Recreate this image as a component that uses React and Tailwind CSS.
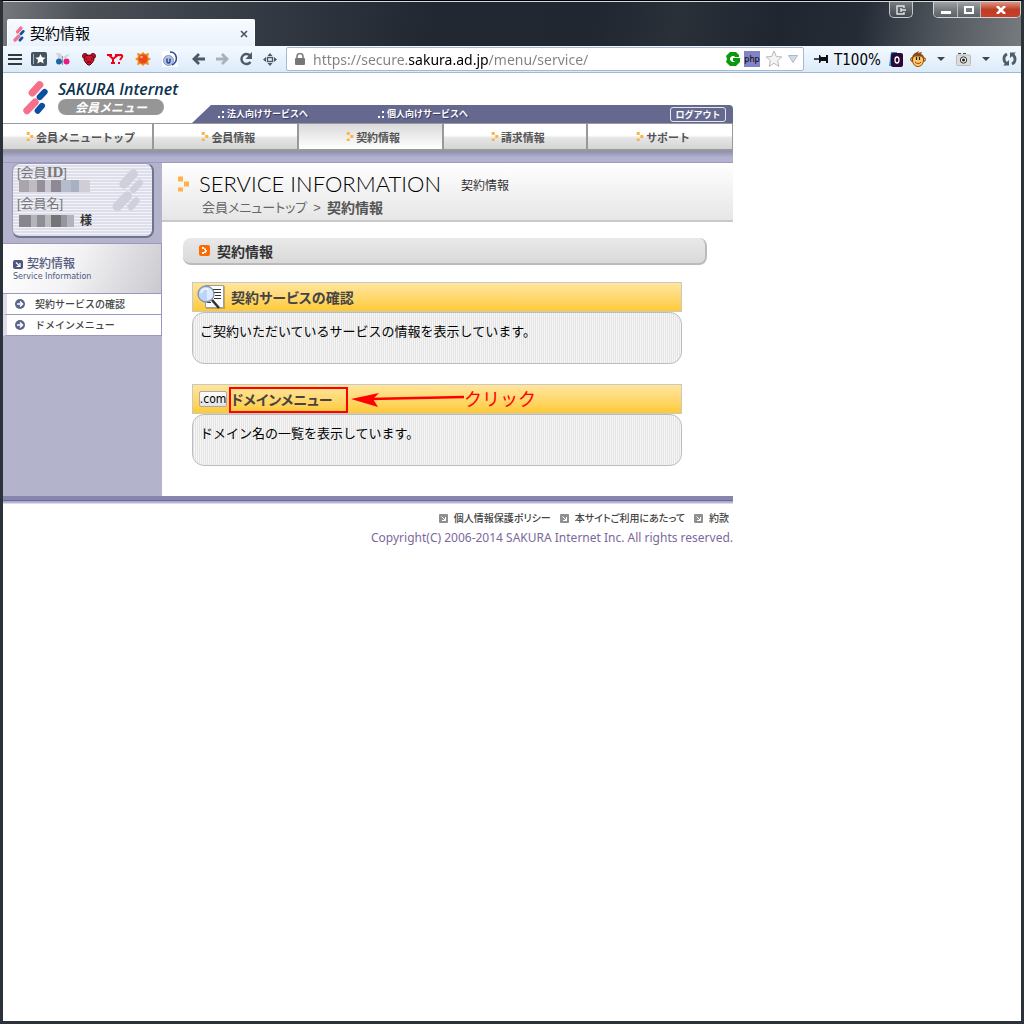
import React from "react";

const JP = "font-['Liberation_Sans','Noto_Sans_CJK_JP',sans-serif]";
const PALT = "[font-feature-settings:'palt']";

function SakuraMark({ className }) {
  return (
    <svg className={className} viewBox="0 0 75 104" fill="none" strokeLinecap="round" aria-hidden="true">
      <path d="M28 38 50 14M12 91 36 66" stroke="#f5708a" strokeWidth="22" />
      <path d="M50 51 65 35M44 92 57 77" stroke="#0a4fa0" strokeWidth="18" />
    </svg>
  );
}

function TriDots({ className }) {
  return (
    <svg className={className} viewBox="0 0 11 15" fill="#ffb347" aria-hidden="true">
      <path d="M0 0h5v5H0zM6 5h5v5H6zM0 11h5v4H0z" />
    </svg>
  );
}

function IconButton({ label, wide, children }) {
  return (
    <button type="button" aria-label={label} className={`flex h-6 shrink-0 items-center justify-center ${wide ? "w-[27px]" : "w-6"}`}>
      {children}
    </button>
  );
}

function Caret({ className }) {
  return (
    <svg className={className} viewBox="0 0 8 4" aria-hidden="true">
      <path d="M0 0h8L4 4z" fill="#3b4650" />
    </svg>
  );
}

function TitleBar() {
  return (
    <div className="flex h-[46px] items-end justify-between border-t border-[#d5dae0] bg-[linear-gradient(100deg,#75797e_0%,#4b5057_8%,#3a4048_20%,#2e353f_30%,#212832_42%,#202731_58%,#293038_66%,#1f2630_76%,#252c36_84%,#4c5259_91%,#777b80_100%)]">
      <div className="ml-1 flex h-7 w-[248px] items-center rounded-t-[2px] border border-b-0 border-white bg-gradient-to-b from-[#f8fbff] to-[#e9f2fc] pr-1 pl-[5px]">
        <SakuraMark className="h-4 w-3" />
        <span className={`${JP} ml-[5px] grow text-[15px] leading-6 text-black`}>契約情報</span>
        <button type="button" aria-label="Close tab" className="flex size-3 items-center justify-center">
          <svg width="8" height="8" viewBox="0 0 8 8" stroke="#4c545c" strokeWidth="1.6" aria-hidden="true">
            <path d="m1 1 6 6M7 1 1 7" />
          </svg>
        </button>
      </div>
      <div className="flex items-start self-start">
        <button type="button" aria-label="Exit group" className="mr-5 flex h-4 w-6 items-center justify-center rounded-b-[5px] border border-t-0 border-[#c5c9cc] bg-gradient-to-b from-[#777c81] to-[#42484f]">
          <svg width="11" height="10" viewBox="0 0 11 10" fill="none" stroke="#dfe3e6" strokeWidth="1.4" aria-hidden="true">
            <path d="M8 3V1H1v8h7V7M5 3v4M5 5h5" />
          </svg>
        </button>
        <div className="flex h-4 overflow-hidden rounded-b-[5px] border border-t-0 border-[#d0d3d6]">
          <button type="button" aria-label="Minimize" className="flex w-6 items-center justify-center border-r border-[#b9bdc0] bg-gradient-to-b from-[#a0a3a5] via-[#777b7f] via-50% to-[#5d6267]">
            <span className="mt-[5px] h-[3px] w-[10px] bg-white" />
          </button>
          <button type="button" aria-label="Maximize" className="flex w-[23px] items-center justify-center border-r border-[#b9bdc0] bg-gradient-to-b from-[#a0a3a5] via-[#777b7f] via-50% to-[#5d6267]">
            <span className="h-2 w-[10px] border-2 border-white" />
          </button>
          <button type="button" aria-label="Close" className="flex w-[39px] items-center justify-center bg-gradient-to-b from-[#d99786] via-[#bd3d25] via-50% to-[#c8402a]">
            <svg width="10" height="8" viewBox="0 0 10 8" stroke="#fff" strokeWidth="2.600" aria-hidden="true">
              <path d="m1 0 8 8M9 0 1 8" />
            </svg>
          </button>
        </div>
      </div>
    </div>
  );
}

function Toolbar() {
  return (
    <div className="flex h-[27px] items-center border-b border-[#9fb8d3] bg-gradient-to-b from-[#f4f9ff] to-[#dcebf9]">
      <IconButton label="Menu">
        <svg width="14" height="11" viewBox="0 0 14 11" fill="#33383d"><path d="M0 0h14v2H0zM0 4h14v2H0zM0 9h14v2H0z" /></svg>
      </IconButton>
      <IconButton label="Bookmarks">
        <svg width="16" height="14" viewBox="0 0 16 14"><rect width="16" height="14" rx="2" fill="#44525f" /><path d="M2.500 2v10" stroke="#a9b6c2" /><path d="m9.500 2 1.500 3.300 3.600.4-2.700 2.400.8 3.500-3.200-1.800-3.200 1.800.8-3.500-2.700-2.400 3.600-.4z" fill="#fff" /></svg>
      </IconButton>
      <IconButton label="Butterfly">
        <svg width="14" height="13" viewBox="0 0 14 13"><path d="M0 0h4l3 4-4 3zM14 1l-4 1-3 2 2 2z" fill="#d3d6d9" /><circle cx="3" cy="8.500" r="3" fill="#1b65a8" /><circle cx="10.500" cy="8.500" r="3" fill="#ea1b80" /><path d="M6.500 3v9" stroke="#999" /></svg>
      </IconButton>
      <div className="flex">
        <IconButton label="Bear" wide>
          <svg width="14" height="13" viewBox="0 0 14 13"><circle cx="3" cy="3" r="2.500" fill="#d31030" stroke="#5c0713" /><circle cx="11" cy="3" r="2.500" fill="#d31030" stroke="#5c0713" /><path d="M3 3q4-2 8 0l1 4-2 3-2 2H6L4 10 2 7z" fill="#d31030" stroke="#5c0713" /><path d="M4 6h1M9 6h1" stroke="#260205" /><path d="M5 8h4v2H5z" fill="#7d0716" /></svg>
        </IconButton>
        <IconButton label="Yahoo" wide>
          <svg width="17" height="10" viewBox="0 0 17 10" fill="none" stroke="#f00016" strokeWidth="2"><path d="M0 1h5M2 1l4 4 5-4M8 1h4M6 5v4M4 9h4M12 2c1-2 4-1 3 1l-2 3M12 8v2" /></svg>
        </IconButton>
        <IconButton label="Weather" wide>
          <svg width="16" height="14" viewBox="0 0 16 14"><path d="m8 0 2 2 4-1-1 4 3 2-3 2 1 4-4-1-2 2-2-2-4 1 1-4-3-2 3-2-1-4 4 1z" fill="#f08a1d" /><circle cx="8" cy="7" r="4.500" fill="#e8481c" /><circle cx="6.500" cy="5" r="1.300" fill="#ffb08a" /></svg>
        </IconButton>
        <IconButton label="Downloader" wide>
          <svg width="16" height="16" viewBox="0 0 16 16" fill="none"><rect width="16" height="16" fill="#fff" /><path d="M8 1c7 0 9 9 2 13" stroke="#2f4f9b" strokeWidth="1.600" /><circle cx="6.500" cy="9.500" r="5" fill="#b5c3e2" stroke="#8093c4" /><path d="M5 7.500v3c0 2 3 2 3 0v-3" stroke="#203e8f" strokeWidth="1.400" /></svg>
        </IconButton>
      </div>
      <div className="mr-1 ml-[3px] flex">
        <IconButton label="Back">
          <svg width="13" height="12" viewBox="0 0 13 12" fill="none" stroke="#4b5a68" strokeWidth="2.800"><path d="M7 1 2 6l5 5M2 6h11" /></svg>
        </IconButton>
        <IconButton label="Forward">
          <svg width="13" height="12" viewBox="0 0 13 12" fill="none" stroke="#a9b1ba" strokeWidth="2.800"><path d="m6 1 5 5-5 5M11 6H0" /></svg>
        </IconButton>
        <IconButton label="Reload">
          <svg width="14" height="14" viewBox="0 0 14 14"><path d="M11 3.500A5 5 0 1 0 11.500 10" fill="none" stroke="#4b5a68" strokeWidth="2.400" /><path d="M13 0v7H6.500z" fill="#4b5a68" /></svg>
        </IconButton>
        <IconButton label="Navigate">
          <svg width="14" height="13" viewBox="0 0 14 13" fill="#4b5a68"><path d="m7 0 2.500 3h-5zM7 13l2.500-3h-5zM0 6.500 3 4v5zM14 6.500 11 4v5z" /><rect x="4.500" y="4.500" width="5" height="4" fill="none" stroke="#4b5a68" strokeWidth="1.400" /></svg>
        </IconButton>
      </div>
      <div className="flex h-6 min-w-0 grow items-center rounded-[2px] border border-[#a5b9d0] bg-white pr-[5px] pl-2">
        <svg className="shrink-0" width="10" height="12" viewBox="0 0 10 12" aria-hidden="true"><path d="M2 6V3.500a3 3 0 0 1 6 0V6" fill="none" stroke="#7c7c7c" strokeWidth="1.600" /><rect y="5" width="10" height="7" rx="1" fill="#777" /></svg>
        <input
          aria-label="Address"
          defaultValue="https://secure.sakura.ad.jp/menu/service/"
          className="ml-2 h-[22px] min-w-0 grow bg-[linear-gradient(90deg,#808080_95px,#000_95px,#000_175px,#808080_175px)] bg-clip-text font-['Noto_Sans','Open_Sans',sans-serif] text-[14px] text-transparent outline-none"
        />
        <div className="flex shrink-0 items-center">
          <svg width="14" height="14" viewBox="0 0 14 14" aria-hidden="true"><path d="M4 0h6l3 3v2H9L8 4H6L4 6v2l2 2h2l1-1H7V6h7v4l-4 4H4L0 10l1-3-1-3z" fill="#0a9a0c" /></svg>
          <span className="ml-1 flex h-4 w-4 items-center justify-center bg-[#8084c4] font-['DejaVu_Sans_Condensed','DejaVu_Sans',sans-serif] text-[9px] leading-4 text-black">php</span>
          <button type="button" aria-label="Bookmark this page" className="ml-[6px]">
            <svg width="16" height="16" viewBox="0 0 16 16"><path d="m8 0 2.300 5.500 5.500.4-4.200 3.700 1.300 5.800L8 12.300l-4.900 3.100 1.300-5.800L.2 5.900l5.500-.4z" fill="#f4f4f4" stroke="#b5b9bd" /></svg>
          </button>
          <button type="button" aria-label="History" className="ml-[6px]">
            <svg width="10" height="8" viewBox="0 0 10 8"><path d="M.5.5h9L5 7.500z" fill="#d3dae3" stroke="#a9b8cb" /></svg>
          </button>
        </div>
      </div>
      <div className="flex shrink-0 items-center pl-[10px]">
        <button type="button" aria-label="Pin" className="flex w-[14px] justify-center">
          <svg width="14" height="8" viewBox="0 0 14 8"><path d="M0 4h5" stroke="#111" strokeWidth="1.500" /><path d="M5 0h1l1 2h5V0h2v8h-2V6H7L6 8H5z" fill="#111" /></svg>
        </button>
        <button type="button" className="ml-[6px] w-12 pt-[2px] text-left font-['DejaVu_Sans_Condensed','Noto_Sans',sans-serif] text-[15px] leading-6 whitespace-nowrap text-black">T100%</button>
        <button type="button" aria-label="Counter" className="ml-[7px]">
          <svg width="15" height="15" viewBox="0 0 15 15"><path d="M2 0h6v14H0z" fill="#2a95c9" /><rect x="2" y="1" width="12" height="14" rx="2" fill="#2c0836" /><ellipse cx="8" cy="8" rx="2" ry="3" fill="none" stroke="#fff" strokeWidth="1.300" /></svg>
        </button>
        <button type="button" aria-label="Monkey" className="ml-[6px]">
          <svg width="16" height="16" viewBox="0 0 16 16"><circle cx="2.500" cy="8.500" r="2" fill="#e5a347" stroke="#9a5a17" /><circle cx="13.500" cy="8.500" r="2" fill="#e5a347" stroke="#9a5a17" /><path d="M2 8c0-5 3-6 7-8l-1 2 4-1-1 2c3 1 3 3 3 6 0 4-3 7-6 7s-6-3-6-7" fill="#8a4b12" /><path d="M3 8.500c0-4 4-3 5-3s5-1 5 3c0 5-2.500 6.500-5 6.500s-5-1.500-5-6.500" fill="#fbc767" /><path d="M6.500 6v3M9.500 6v3" stroke="#222" strokeWidth="1.200" /><path d="M5 11c1 2 5 2 6 0" fill="none" stroke="#9b4a17" /></svg>
        </button>
        <button type="button" aria-label="Monkey menu" className="ml-[11px]"><Caret className="h-1 w-2" /></button>
        <button type="button" aria-label="Capture" className="ml-[11px]">
          <svg width="15" height="13" viewBox="0 0 15 13"><path d="M2 .5h3M7 .5h3" stroke="#444" /><rect x=".5" y="2" width="14" height="10.500" rx="1" fill="#dcdcdc" stroke="#bbb" /><circle cx="7.500" cy="7" r="3.200" fill="#f2f2f2" stroke="#333" /><circle cx="7.500" cy="7" r="1.500" fill="#222" /></svg>
        </button>
        <button type="button" aria-label="Capture menu" className="ml-[11px]"><Caret className="h-1 w-2" /></button>
        <button type="button" aria-label="Sync" className="mr-1 ml-3">
          <svg width="15" height="14" viewBox="0 0 15 14"><path d="M5 2C1 4 1 9 4.500 11.500M10 12c4-2 4-7 .5-9.500" fill="none" stroke="#4f5d6b" strokeWidth="2.800" /><path d="M1 13.500h6V8zM14 .5H8V6z" fill="#4f5d6b" /></svg>
        </button>
      </div>
    </div>
  );
}

function ServiceLink({ children }) {
  return (
    <a href="#" className="flex items-center gap-[3px] [text-shadow:1px_1px_1px_#33365e]">
      <svg width="6" height="7" viewBox="0 0 6 7" fill="#fff" aria-hidden="true"><path d="M0 5h2v2H0zM4 0h2v2H4zM4 5h2v2H4z" /></svg>
      {children}
    </a>
  );
}

function SiteHeader() {
  return (
    <header className="flex h-[50px] items-end">
      <a href="#" aria-label="SAKURA Internet" className="flex w-[189px] shrink-0 items-center self-start pt-[7px] pl-5">
        <SakuraMark className="h-[35px] w-[25px] shrink-0" />
        <span className="ml-[10px] flex flex-col">
          <span className="font-['Open_Sans','Noto_Sans',sans-serif] text-[16px] leading-[19px] font-semibold whitespace-nowrap text-[#0c3350] italic">SAKURA Internet</span>
          <span className="flex h-4 w-[106px] items-center justify-center rounded-full bg-[#969696] font-['Noto_Sans_CJK_JP',sans-serif] text-[12px] leading-4 font-bold text-white italic">会員メニュー</span>
        </span>
      </a>
      <div className="flex h-[18px] grow items-center rounded-tr-[4px] bg-[#66698f] pr-[7px] pl-[26px] [clip-path:polygon(19px_0,100%_0,100%_100%,0_100%)]">
        <div className="flex gap-[70px] font-['Noto_Sans_CJK_JP',sans-serif] text-[9px] leading-[18px] font-bold whitespace-nowrap text-white">
          <ServiceLink>法人向けサービスへ</ServiceLink>
          <ServiceLink>個人向けサービスへ</ServiceLink>
        </div>
        <button type="button" className="ml-auto h-[15px] w-14 rounded-[3px] border border-[#e4e5ef] font-['Noto_Sans_CJK_JP',sans-serif] text-[9px] leading-[13px] font-bold whitespace-nowrap text-white">ログアウト</button>
      </div>
    </header>
  );
}

const NAV = ["会員メニュートップ", "会員情報", "契約情報", "請求情報", "サポート"];

function MainNav() {
  return (
    <nav className="grid h-7 grid-cols-[151px_1fr_1fr_1fr_1fr] border-t border-b-2 border-[#999]">
      {NAV.map((label, i) => (
        <a
          key={label}
          href="#"
          className={`flex items-center justify-center border-r-2 pl-[6px] font-['Noto_Sans_CJK_JP',sans-serif] text-[11px] leading-5 font-bold text-[#555] last:border-r ${
            i === 2
              ? "border-[#999] bg-gradient-to-b from-[#dadada] to-white"
              : "border-[#999] bg-[linear-gradient(#fff_0%,#fff_45%,#e6e6e6_55%,#d4d4d4_100%)]"
          }`}
        >
          <TriDots className="mr-[2px] h-[9px] w-2" />
          {label}
        </a>
      ))}
    </nav>
  );
}

function SideItem({ children }) {
  return (
    <li>
      <a href="#" className="flex h-[21px] items-center border-b border-l-4 border-b-[#9c98bd] border-l-[#dcdde9] bg-white pl-2">
        <svg width="10" height="10" viewBox="0 0 10 10" aria-hidden="true"><circle cx="5" cy="5" r="5" fill="#5c6489" /><path d="M2 5h5M5 2.500 7.500 5 5 7.500" fill="none" stroke="#fff" strokeWidth="1.500" /></svg>
        <span className={`${JP} ml-[10px] pt-[2px] text-[10px] leading-4 font-medium text-[#444]`}>{children}</span>
      </a>
    </li>
  );
}

function Sidebar() {
  return (
    <aside className="w-[159px] shrink-0 bg-[#b3b3cc]">
      <div className={`relative mr-2 mb-[5px] ml-[9px] h-[75px] rounded-[8px] border border-r-2 border-b-2 border-[#70738f] border-t-[#9a9cb5] border-l-[#9a9cb5] bg-[repeating-linear-gradient(#f3f3fa_0_1px,#dedeea_1px_3px)] pl-1 ${JP} text-[13px] leading-4 text-[#777]`}>
        <svg className="absolute top-1 right-2 h-11 w-8" viewBox="0 0 75 104" fill="none" strokeLinecap="round" stroke="#d0d0dd" aria-hidden="true">
          <path d="M28 38 50 14M12 91 36 66" strokeWidth="22" />
          <path d="M50 51 65 35M44 92 57 77" strokeWidth="16" />
        </svg>
        <div className="relative h-4">[会員<span className="font-['Liberation_Serif',serif] text-[15px] font-bold">ID</span>]</div>
        <div className="relative ml-[2px] h-3 w-[71px] bg-[linear-gradient(90deg,#aaa4ad_0_10px,#c0bcc6_10px_18px,#968f9c_18px_26px,#c8c6d0_26px_32px,#8d8995_32px_42px,#b5bccb_42px_52px,#a8b0c4_52px_60px,#d1cdd7_60px)]" />
        <div className="relative mt-1">[会員名]</div>
        <div className="relative mt-[1px] flex items-center">
          <span className="ml-[2px] h-3 w-[55px] bg-[linear-gradient(90deg,#86868c_0_12px,#b4b4bb_12px_18px,#8e8e96_18px_26px,#bbb_26px_32px,#737379_32px_42px,#96969f_42px_48px,#b3b3bd_48px)]" />
          <span className="ml-[6px] text-[12px] font-bold text-[#333]">様</span>
        </div>
      </div>
      <div className="flex h-[51px] flex-col border-t border-r border-b border-[#9c98bd] bg-[linear-gradient(115deg,#fff_0%,#f3f3f5_45%,#c9c9cf_100%)] pt-3 pl-[10px]">
        <div className="flex items-center gap-1">
          <svg width="10" height="9" viewBox="0 0 10 9" aria-hidden="true"><rect width="10" height="9" rx="2" fill="#4f557e" /><path d="m3 2.500 4 4M7 3v3.500H3.500" fill="none" stroke="#fff" strokeWidth="1.200" /></svg>
          <h2 className={`${JP} text-[12px] leading-4 font-medium text-[#555a80]`}>契約情報</h2>
        </div>
        <p className="font-['DejaVu_Sans',sans-serif] text-[8px] leading-[10px] text-[#4f557e]">Service Information</p>
      </div>
      <ul className="border-r border-[#9c98bd]">
        <SideItem>契約サービスの確認</SideItem>
        <SideItem>ドメインメニュー</SideItem>
      </ul>
    </aside>
  );
}

function DocIcon() {
  return (
    <svg className="h-[26px] w-7 shrink-0" viewBox="0 0 28 26" aria-hidden="true">
      <path d="M9 2h19v23H9z" fill="#a88a45" opacity=".6" />
      <path d="M8.500 1.500h18v22h-18z" fill="#fff" stroke="#9a9ea6" />
      <path d="M16 5.500h8M17 8.500h7M18 11.500h6M17 14.500h7M10 18.500h4" stroke="#333" />
      <circle cx="9" cy="10" r="8" fill="#bcd4fa" stroke="#7f93ac" strokeWidth="1.300" />
      <path d="M10 4v12c4 0 6-3 6-6s-2-6-6-6z" fill="#dfeafd" />
      <path d="M4 9c1-4 4-5 7-4" stroke="#eef6ff" strokeWidth="2" fill="none" />
      <path d="m15 16 7 8" stroke="#333" strokeWidth="2.600" />
    </svg>
  );
}

function ServiceCard({ icon, title, text, children }) {
  return (
    <section className="w-[490px] max-w-full">
      <div className="relative flex h-[30px] items-center border border-[#c8c8c8] bg-gradient-to-b from-[#ffe59c] to-[#ffca30]">
        <div className="flex w-[38px] shrink-0 items-center pl-1">{icon}</div>
        <h3 className={`${JP} ${PALT} pt-[2px] text-[14px] leading-5 font-bold text-[#444]`}><a href="#">{title}</a></h3>
        {children}
      </div>
      <div className={`h-[52px] rounded-[12px] border border-[#bcbcbc] bg-[repeating-linear-gradient(90deg,#e4e4e4_0_1px,#f6f6f6_1px_2px)] px-[7px] pt-[9px] ${JP} text-[13px] leading-5 text-black`}>{text}</div>
    </section>
  );
}

function ClickNote() {
  return (
    <div className="absolute top-[2px] left-9 flex items-center whitespace-nowrap">
      <span className="h-[26px] w-[119px] border-2 border-[#f00]" />
      <svg className="h-4 w-[116px] shrink-0" viewBox="0 0 116 16" aria-hidden="true">
        <path d="m3 7 28-6-6 6 5 8z" fill="#f00" />
        <path d="m22 7 94-2" stroke="#f00" strokeWidth="2.500" />
      </svg>
      <span className={`${JP} text-[18px] leading-6 text-[#f00]`}>クリック</span>
    </div>
  );
}

function Content() {
  return (
    <main className="min-w-0 grow bg-white pb-[30px]">
      <div className="h-[59px] border-b-2 border-[#c8c8c8] bg-gradient-to-b from-white to-[#e6e6e6] pl-4">
        <div className="flex items-center pt-[7px]">
          <TriDots className="mr-[10px] h-4 w-[11px]" />
          <h1 className="font-['Lato',sans-serif] text-[22px] leading-7 font-light whitespace-nowrap text-black">SERVICE INFORMATION</h1>
          <span className={`${JP} ml-5 pt-1 text-[12px] leading-5 whitespace-nowrap text-[#333]`}>契約情報</span>
        </div>
        <div className={`${JP} ${PALT} flex pl-6 text-[13px] leading-5 whitespace-nowrap text-[#666]`}>
          <a href="#">会員メニュートップ</a>
          <span className="px-[6px]">&gt;</span>
          <span className="text-[14px] font-bold text-[#555]">契約情報</span>
        </div>
      </div>
      <div className="mt-4 mr-[26px] ml-[21px] flex h-[27px] items-center rounded-[8px] border-r-2 border-b-2 border-[#bbb] bg-gradient-to-b from-[#e9e9e9] to-[#d9d9d9] pl-4">
        <svg width="11" height="11" viewBox="0 0 11 11" aria-hidden="true"><rect width="11" height="11" rx="2" fill="#ff6a00" /><path d="M3 2h2v2H3zM5 3.500h2v1.500h1v1.500H7V8H5V6.500h1V5H5zM3 7h2v2H3z" fill="#fff" /></svg>
        <h2 className={`${JP} ml-[7px] pt-[2px] text-[14px] leading-5 font-bold text-[#333]`}>契約情報</h2>
      </div>
      <div className="mt-[17px] flex flex-col gap-5 pr-[51px] pl-[30px]">
        <ServiceCard icon={<DocIcon />} title="契約サービスの確認" text="ご契約いただいているサービスの情報を表示しています。" />
        <ServiceCard
          icon={<span className="ml-[2px] flex h-4 w-7 items-center justify-center rounded-[2px] border border-[#aaa] bg-gradient-to-b from-white to-[#e2e2e2] font-['Liberation_Sans_Narrow','DejaVu_Sans_Condensed',sans-serif] text-[12px] leading-4 text-black">.com</span>}
          title="ドメインメニュー"
          text="ドメイン名の一覧を表示しています。"
        >
          <ClickNote />
        </ServiceCard>
      </div>
    </main>
  );
}

function FootLink({ children }) {
  return (
    <a href="#" className="flex items-center gap-[6px]">
      <svg width="9" height="9" viewBox="0 0 9 9" aria-hidden="true"><rect width="9" height="9" rx="1" fill="#8f8f8f" /><path d="m2.500 2.500 4 4M6.500 3v3.500H3" fill="none" stroke="#fff" /></svg>
      {children}
    </a>
  );
}

export default function App() {
  return (
    <div className="flex min-h-screen flex-col border-x-[3px] border-y-[3px] border-t border-[#2c323a] border-t-black bg-white">
      <TitleBar />
      <div className="-mt-px"><Toolbar /></div>
      <div className="w-full max-w-[730px] grow">
        <SiteHeader />
        <MainNav />
        <div className="h-3 border-b border-[#9f9abb] bg-gradient-to-b from-[#8e90ab] to-[#b0b2d0] to-60%" />
        <div className="flex bg-[#b3b3cc]">
          <Sidebar />
          <Content />
        </div>
        <div className="h-2 bg-[linear-gradient(#8585ae_0_4px,#6c6c9c_4px_5px,#a9a9c6_5px_6px,#ececf3_8px)]" />
        <footer>
          <div className={`${PALT} flex justify-end gap-[9px] pt-1 pr-1 font-['Noto_Sans_CJK_JP',sans-serif] text-[10px] leading-5 font-medium text-[#444]`}>
            <FootLink>個人情報保護ポリシー</FootLink>
            <FootLink>本サイトご利用にあたって</FootLink>
            <FootLink>約款</FootLink>
          </div>
          <p className="text-right font-['Noto_Sans','Open_Sans',sans-serif] text-[12px] leading-5 text-[#7c689c]">Copyright(C) 2006-2014 SAKURA Internet Inc. All rights reserved.</p>
        </footer>
      </div>
    </div>
  );
}
